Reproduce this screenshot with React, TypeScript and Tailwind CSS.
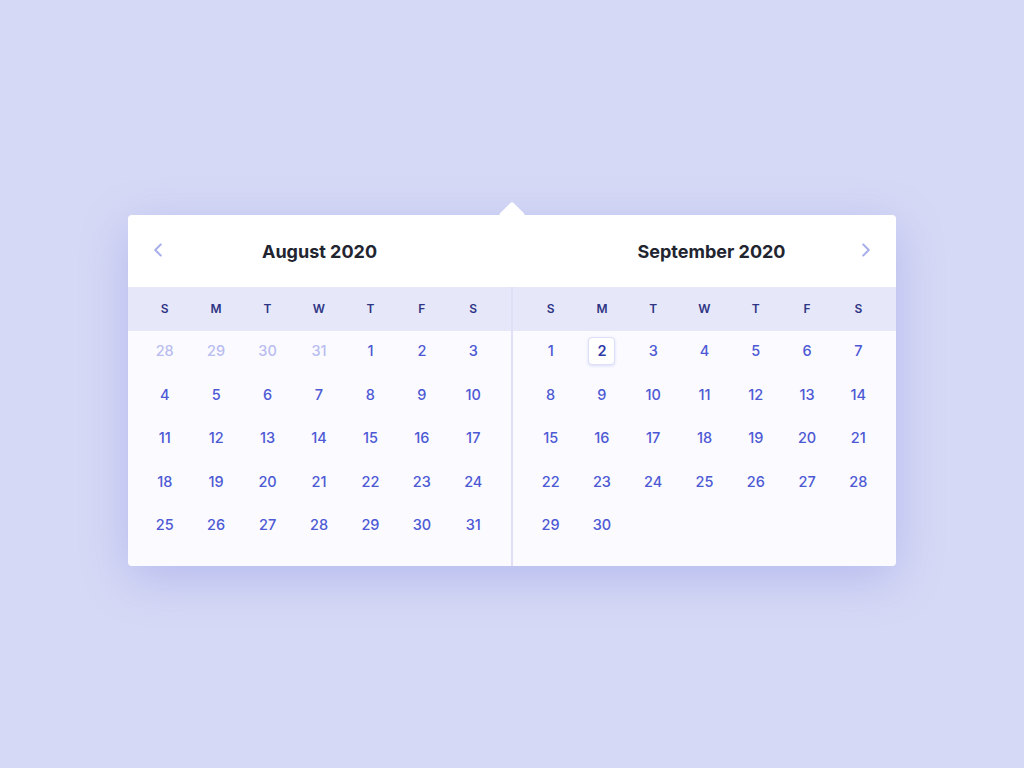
import { ChevronLeft, ChevronRight } from 'lucide-react';

const weekdays = ['S', 'M', 'T', 'W', 'T', 'F', 'S'];

type Day = { n: number; muted?: boolean; selected?: boolean };

const august: (Day | null)[] = [
  { n: 28, muted: true },
  { n: 29, muted: true },
  { n: 30, muted: true },
  { n: 31, muted: true },
  ...Array.from({ length: 31 }, (_, i) => ({ n: i + 1 })),
];

const september: (Day | null)[] = Array.from({ length: 30 }, (_, i) => ({
  n: i + 1,
  selected: i + 1 === 2,
}));

function WeekdayRow({ className }: { className: string }) {
  return (
    <div className={`grid grid-cols-7 h-[44px] items-center ${className}`}>
      {weekdays.map((d, i) => (
        <div key={i} className="text-center text-[12px] font-semibold text-[#2e3585]">
          {d}
        </div>
      ))}
    </div>
  );
}

function DayGrid({ days, className }: { days: (Day | null)[]; className: string }) {
  return (
    <div className={`grid grid-cols-7 gap-y-[11.5px] pt-[4px] pb-[25px] ${className}`}>
      {days.map((d, i) => (
        <div key={i} className="h-8 flex items-center justify-center">
          {d &&
            (d.selected ? (
              <span className="w-[27px] h-[28px] flex items-center justify-center rounded-[4px] bg-white border border-[#dcdff7] shadow-[0_1px_3px_rgba(80,90,210,0.18)] text-[14.5px] font-semibold text-[#2f3aa8]">
                {d.n}
              </span>
            ) : (
              <span
                className={`text-[14.5px] font-medium ${
                  d.muted ? 'text-[#b9bdf0]' : 'text-[#4d59d4]'
                }`}
              >
                {d.n}
              </span>
            ))}
        </div>
      ))}
    </div>
  );
}

export default function App() {
  return (
    <div
      className="min-h-screen bg-[#d6d9f5] pt-[215px]"
      style={{ fontFamily: 'Inter, "Noto Sans", sans-serif' }}
    >
      <div className="relative w-[768px] mx-auto rounded-[4px] shadow-[0_12px_48px_rgba(110,120,225,0.32)]">
        {/* pointer */}
        <div className="absolute left-[375px] -top-[10px] w-[18px] h-[18px] rotate-45 rounded-tl-[3px] bg-white" />

        <div className="relative rounded-[4px] overflow-hidden">
          {/* header */}
          <div className="flex h-[72px] bg-white">
            <div className="w-[383px] flex items-center">
              <button className="w-[60px] flex justify-center text-[#a9afea] -mt-[2px]">
                <ChevronLeft size={22} strokeWidth={2.2} />
              </button>
              <h2 className="flex-1 pr-[60px] text-center text-[18px] font-bold text-[#22252f]">
                August 2020
              </h2>
            </div>
            <div className="w-[385px] flex items-center">
              <h2 className="flex-1 pl-[76px] text-center text-[18px] font-bold text-[#22252f]">
                September 2020
              </h2>
              <button className="w-[60px] flex justify-center text-[#a9afea] -mt-[2px]">
                <ChevronRight size={22} strokeWidth={2.2} />
              </button>
            </div>
          </div>

          {/* months */}
          <div className="flex bg-[#fafaff]">
            <div className="w-[383px]">
              <WeekdayRow className="bg-[#e6e7f8] pl-[11px] pr-3" />
              <DayGrid days={august} className="pl-[11px] pr-3" />
            </div>
            <div className="w-[2px] bg-[#dfe0f5]" />
            <div className="w-[383px]">
              <WeekdayRow className="bg-[#e6e7f8] px-3" />
              <DayGrid days={september} className="px-3" />
            </div>
          </div>
        </div>
      </div>
    </div>
  );
}
